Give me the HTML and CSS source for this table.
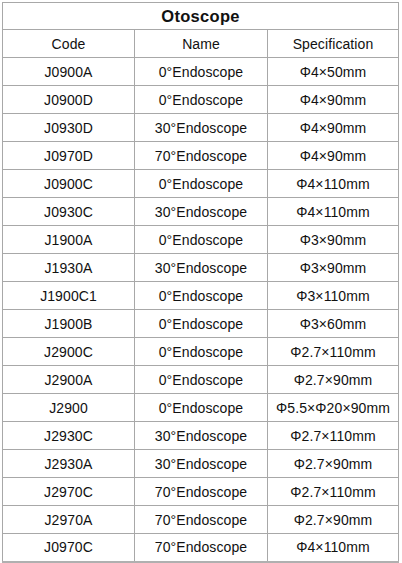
FILE: index.html
```html
<!DOCTYPE html>
<html>
<head>
<meta charset="utf-8">
<link rel="stylesheet" href="styles.css">
</head>
<body>
<table class="spec">
<colgroup><col class="c1"><col class="c2"><col class="c3"></colgroup>
<thead>
<tr class="title-row"><th colspan="3">Otoscope</th></tr>
<tr><td>Code</td><td>Name</td><td>Specification</td></tr>
</thead>
<tbody>
<tr><td>J0900A</td><td>0°Endoscope</td><td>Φ4×50mm</td></tr>
<tr><td>J0900D</td><td>0°Endoscope</td><td>Φ4×90mm</td></tr>
<tr><td>J0930D</td><td>30°Endoscope</td><td>Φ4×90mm</td></tr>
<tr><td>J0970D</td><td>70°Endoscope</td><td>Φ4×90mm</td></tr>
<tr><td>J0900C</td><td>0°Endoscope</td><td>Φ4×110mm</td></tr>
<tr><td>J0930C</td><td>30°Endoscope</td><td>Φ4×110mm</td></tr>
<tr><td>J1900A</td><td>0°Endoscope</td><td>Φ3×90mm</td></tr>
<tr><td>J1930A</td><td>30°Endoscope</td><td>Φ3×90mm</td></tr>
<tr><td>J1900C1</td><td>0°Endoscope</td><td>Φ3×110mm</td></tr>
<tr><td>J1900B</td><td>0°Endoscope</td><td>Φ3×60mm</td></tr>
<tr><td>J2900C</td><td>0°Endoscope</td><td>Φ2.7×110mm</td></tr>
<tr><td>J2900A</td><td>0°Endoscope</td><td>Φ2.7×90mm</td></tr>
<tr><td>J2900</td><td>0°Endoscope</td><td>Φ5.5×Φ20×90mm</td></tr>
<tr><td>J2930C</td><td>30°Endoscope</td><td>Φ2.7×110mm</td></tr>
<tr><td>J2930A</td><td>30°Endoscope</td><td>Φ2.7×90mm</td></tr>
<tr><td>J2970C</td><td>70°Endoscope</td><td>Φ2.7×110mm</td></tr>
<tr><td>J2970A</td><td>70°Endoscope</td><td>Φ2.7×90mm</td></tr>
<tr><td>J0970C</td><td>70°Endoscope</td><td>Φ4×110mm</td></tr>
</tbody>
</table>
</body>
</html>
```
FILE: styles.css
```css
html, body {
  margin: 0;
  padding: 0;
  background: #fff;
}
body {
  padding: 2px;
}
.spec {
  border-collapse: collapse;
  table-layout: fixed;
  width: 396px;
  font-family: "Liberation Sans", Arial, sans-serif;
  font-size: 14px;
  letter-spacing: 0.1px;
  color: #111;
}
.c1 { width: 132px; }
.c2 { width: 133px; }
.c3 { width: 131px; }
.spec th, .spec td {
  border: 1px solid #a8a8a8;
  text-align: center;
  vertical-align: middle;
  padding: 0;
  height: 28px;
  box-sizing: border-box;
}
.title-row th {
  font-size: 16.5px;
  letter-spacing: 0.3px;
  font-weight: bold;
  height: 27px;
}
.spec tbody tr:last-child td {
  border-bottom: 2px solid #b0b0b0;
}
```
